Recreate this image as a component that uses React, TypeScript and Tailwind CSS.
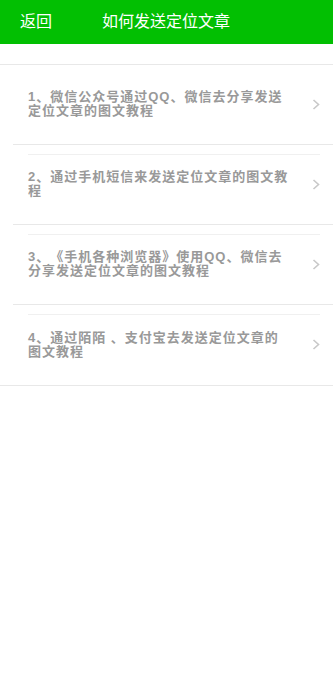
const items = [
  '1、微信公众号通过QQ、微信去分享发送定位文章的图文教程',
  '2、通过手机短信来发送定位文章的图文教程',
  '3、《手机各种浏览器》使用QQ、微信去分享发送定位文章的图文教程',
  '4、通过陌陌 、支付宝去发送定位文章的图文教程',
];

function Chevron() {
  return (
    <svg width="8" height="11" viewBox="0 0 8 11" className="shrink-0">
      <path d="M1.5 1 L6.5 5.5 L1.5 10" fill="none" stroke="#c8c8c8" strokeWidth="1.6" />
    </svg>
  );
}

export default function App() {
  return (
    <div
      className="w-[333px] min-h-[678px] bg-white"
      style={{ fontFamily: '"Liberation Sans", "Noto Sans CJK SC", sans-serif' }}
    >
      {/* Header */}
      <div className="flex items-center h-[44px] bg-[#02bf02] pl-[20px] text-white text-[16px] leading-none">
        <span>返回</span>
        <span className="ml-[50px]">如何发送定位文章</span>
      </div>

      {/* List */}
      <div className="mt-[20px] border-t border-b border-[#e8e8e8]">
        {items.map((text, i) => (
          <div
            key={i}
            className={`flex flex-col h-[80px] ml-[13px] ${i < items.length - 1 ? 'border-b border-[#e8e8e8]' : ''}`}
          >
            <div className={`h-[10px] ml-[15px] mr-[13px] ${i > 0 ? 'border-b border-[#f0f0f0]' : ''}`} />
            <div className="flex-1 flex items-center pb-[11px] pl-[15px] pr-[13px]">
              <div className="w-[263px] text-[13px] leading-[14px] font-bold tracking-[1px] text-[#999999] [text-spacing-trim:space-all]">
                {text}
              </div>
              <div className="flex-1" />
              <Chevron />
            </div>
          </div>
        ))}
      </div>
    </div>
  );
}
